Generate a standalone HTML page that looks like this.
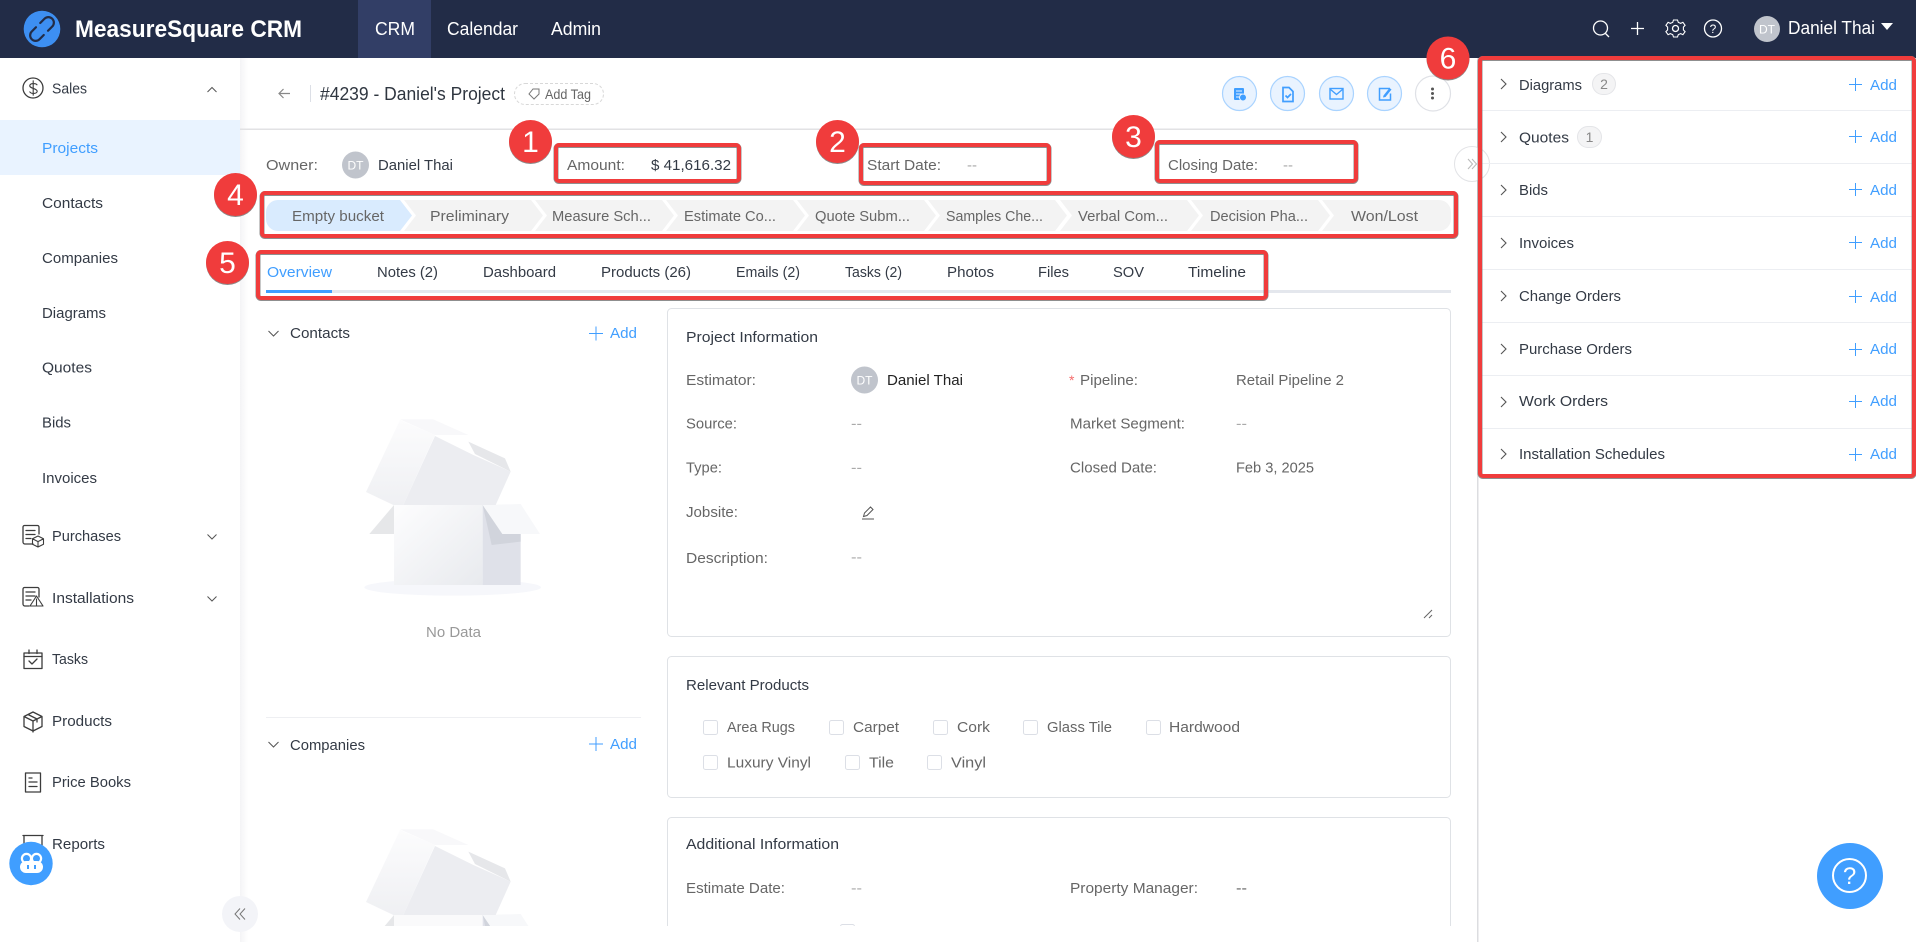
<!DOCTYPE html>
<html lang="en">
<head>
<meta charset="utf-8">
<title>MeasureSquare CRM</title>
<style>
html,body{margin:0;padding:0;background:#fff;width:1916px;height:942px;overflow:hidden}
svg{display:block;font-family:"Liberation Sans",Arial,sans-serif;font-size:15px}
.d{fill:#333a45}.g{fill:#666}.l{fill:#999}.b{fill:#409eff}.w{fill:#fff}
.dash{fill:#aaa}
.ic{fill:none;stroke:#3c3c3c;stroke-width:1.3;stroke-linejoin:round;stroke-linecap:round}
.ch{fill:none;stroke:#555;stroke-width:1}
.wi{fill:none;stroke:#fff;stroke-width:1.3}
.bl{fill:none;stroke:#409eff;stroke-width:1}
.rb{fill:none;stroke:#f03c3c;stroke-width:4}
.rs{fill:none;stroke:#8f8f8f;stroke-width:5}
.cb{fill:#fff;stroke:#dcdfe6;stroke-width:1}
.sep{stroke:#eceef2;stroke-width:1}
.num{fill:#fff;font-size:30px;text-anchor:middle}
</style>
</head>
<body>
<svg width="1916" height="942" viewBox="0 0 1916 942" xmlns="http://www.w3.org/2000/svg">
<defs>
<linearGradient id="sh" x1="0" x2="1" y1="0" y2="0"><stop offset="0" stop-color="#f4f4f6"/><stop offset="1" stop-color="#fff"/></linearGradient>
<linearGradient id="bf" x1="0" x2="1" y1="0" y2="1"><stop offset="0" stop-color="#fdfdfe"/><stop offset="1" stop-color="#e8eaee"/></linearGradient>
<linearGradient id="bl" x1="0" x2="0" y1="0" y2="1"><stop offset="0" stop-color="#fcfcfd"/><stop offset="1" stop-color="#eff0f3"/></linearGradient>
<g id="lid">
<polygon points="420,360 525,405 430,615 400,615 318,576" fill="url(#bl)"/>
<polygon points="420,358 520,358 625,405 525,405" fill="#f8f8fa"/>
<polygon points="525,408 640,465 752,515 707,615 430,615" fill="#ecedf1"/>
<polygon points="625,425 735,475 752,515 645,462" fill="#e6e7ea"/>
</g>
</defs>

<!-- main background pieces -->
<rect x="240" y="58" width="8" height="884" fill="url(#sh)"/>

<!-- sidebar -->
<rect x="0" y="120" width="240" height="55" fill="#e9f3ff"/>
<circle cx="33" cy="88" r="10" class="ic"/>
<path d="M37 84.800c-1-1.600-6.500-2-7.200.6-.8 3.200 7.400 2.800 7.400 5.900-.5 2.900-6.200 2.600-7.400.6M33.200 80.800v14.400" class="ic" style="stroke-width:1.100"/>
<text x="52" y="93.500" class="d" textLength="35" lengthAdjust="spacingAndGlyphs">Sales</text>
<path d="M207.500 92l4.500-4.500 4.500 4.500" class="ch"/>
<text x="42" y="153" class="b" textLength="56" lengthAdjust="spacingAndGlyphs">Projects</text>
<text x="42" y="208" class="d" textLength="61" lengthAdjust="spacingAndGlyphs">Contacts</text>
<text x="42" y="263" class="d" textLength="76" lengthAdjust="spacingAndGlyphs">Companies</text>
<text x="42" y="318" class="d" textLength="64" lengthAdjust="spacingAndGlyphs">Diagrams</text>
<text x="42" y="372.500" class="d" textLength="50" lengthAdjust="spacingAndGlyphs">Quotes</text>
<text x="42" y="427.500" class="d" textLength="29" lengthAdjust="spacingAndGlyphs">Bids</text>
<text x="42" y="483" class="d" textLength="55" lengthAdjust="spacingAndGlyphs">Invoices</text>

<path d="M33 544h-8a2 2 0 0 1-2-2v-15a1.500 1.500 0 0 1 1.500-1.500h13a1.500 1.500 0 0 1 1.500 1.500v7M26 530.500h9M26 534.500h9M26 538.500h5" class="ic"/>
<path d="M38 536l5.500 2.800v5.400l-5.500 2.800-5.500-2.800v-5.400zM32.500 538.800l5.500 2.800 5.500-2.800M38 541.600v5.400" class="ic" style="stroke-width:1.100"/>
<text x="52" y="541" class="d" textLength="69" lengthAdjust="spacingAndGlyphs">Purchases</text>
<path d="M207.500 534.500l4.500 4.500 4.500-4.500" class="ch"/>

<path d="M29 606h-4a2 2 0 0 1-2-2v-15a1.500 1.500 0 0 1 1.500-1.500h13a1.500 1.500 0 0 1 1.500 1.500v8M26 592h9M26 596h9M26 600h5" class="ic"/>
<path d="M30 606l6.500-10 6.500 10zM36.500 599v7" class="ic" style="stroke-width:1.100"/>
<text x="52" y="603" class="d" textLength="82" lengthAdjust="spacingAndGlyphs">Installations</text>
<path d="M207.500 596.500l4.500 4.500 4.500-4.500" class="ch"/>

<rect x="24" y="653" width="18" height="15.500" class="ic"/>
<path d="M24 656.500h18M29 650v3.500M37 650v3.500M29 661l3 3 5-5" class="ic"/>
<text x="52" y="664" class="d" textLength="36" lengthAdjust="spacingAndGlyphs">Tasks</text>

<path d="M33 712l9 4.500v10l-9 4.500-9-4.500v-10zM24 716.500l9 4.500 9-4.500M33 721v11M28 714.500l9 4.500v3" class="ic"/>
<text x="52" y="726" class="d" textLength="60" lengthAdjust="spacingAndGlyphs">Products</text>

<rect x="25.500" y="773" width="15" height="19" class="ic"/>
<path d="M29 778h3M29 782h8M29 786.500h8" class="ic"/>
<text x="52" y="787" class="d" textLength="79" lengthAdjust="spacingAndGlyphs">Price Books</text>

<path d="M23 835.500h20M24 836v14M42 836v14M28 846l3 3 5-5" class="ic"/>
<text x="52" y="849" class="d" textLength="53" lengthAdjust="spacingAndGlyphs">Reports</text>

<!-- main title bar -->
<path d="M279 93.500h11M283.500 89l-4.500 4.500 4.500 4.500" fill="none" stroke="#888" stroke-width="1.200"/>
<rect x="310" y="85" width="1" height="17" fill="#dcdfe6"/>
<text x="320" y="100" style="font-size:18px" fill="#2f3640" textLength="185" lengthAdjust="spacingAndGlyphs">#4239 - Daniel's Project</text>
<rect x="514.500" y="83.500" width="89" height="21" rx="10.500" fill="#fff" stroke="#d8d8d8" stroke-dasharray="3 2"/>
<path d="M533 89h6v5l-5 5-5-5z" fill="none" stroke="#777" stroke-width="1"/>
<text x="545" y="99" class="g" style="font-size:14px" textLength="46" lengthAdjust="spacingAndGlyphs">Add Tag</text>
<rect x="240" y="128.500" width="1238" height="1.500" fill="#e2e2e4"/>

<g fill="#e9f3ff" stroke="#a9d3ff" stroke-width="1.200">
<circle cx="1239.500" cy="93.500" r="17"/><circle cx="1287.500" cy="93.500" r="17"/><circle cx="1336.500" cy="93.500" r="17"/><circle cx="1384.500" cy="93.500" r="17"/>
</g>
<circle cx="1433" cy="93.500" r="17.500" fill="#fff" stroke="#dfe1e6" stroke-width="1.200"/>
<rect x="1234" y="88" width="10" height="12" rx="1" fill="#409eff"/><path d="M1236 91h6M1236 94h6M1236 97h3" stroke="#e9f3ff"/>
<circle cx="1243" cy="97.500" r="3.500" fill="#409eff" stroke="#e9f3ff"/>
<path d="M1283 87.500h6l4 4v10h-10zM1285.500 95.500l2 2 3.500-3.500" fill="none" stroke="#409eff" stroke-width="1.700"/>
<rect x="1330" y="88.500" width="13" height="10.500" fill="none" stroke="#409eff" stroke-width="1.400"/><path d="M1330 89l6.500 5.500 6.500-5.500" fill="none" stroke="#409eff" stroke-width="1.400"/>
<path d="M1390 88.500h-10.500v11.500h11v-6.500" fill="none" stroke="#409eff" stroke-width="1.500"/><path d="M1383.500 95.500l6-7.500 2 1.500-6 7.500-2.500.5z" fill="#409eff"/>
<circle cx="1432.500" cy="89" r="1.500" fill="#555"/><circle cx="1432.500" cy="93.500" r="1.500" fill="#555"/><circle cx="1432.500" cy="98" r="1.500" fill="#555"/>

<!-- owner row -->
<text x="266" y="170" class="g" textLength="52" lengthAdjust="spacingAndGlyphs">Owner:</text>
<circle cx="355.500" cy="165" r="13.500" fill="#c0c4cc"/>
<text x="355.500" y="169.500" fill="#fff" style="font-size:12px" text-anchor="middle">DT</text>
<text x="378" y="170" class="d" textLength="75" lengthAdjust="spacingAndGlyphs">Daniel Thai</text>
<text x="567" y="170" class="g" textLength="58" lengthAdjust="spacingAndGlyphs">Amount:</text>
<text x="651" y="170" class="d" textLength="80" lengthAdjust="spacingAndGlyphs">$ 41,616.32</text>
<text x="867" y="170" class="g" textLength="74" lengthAdjust="spacingAndGlyphs">Start Date:</text>
<text x="967" y="170" class="dash" textLength="10" lengthAdjust="spacingAndGlyphs">--</text>
<text x="1168" y="170" class="g" textLength="90" lengthAdjust="spacingAndGlyphs">Closing Date:</text>
<text x="1283" y="170" class="dash" textLength="10" lengthAdjust="spacingAndGlyphs">--</text>

<!-- stage bar -->
<path d="M278 200H400L412 215.500 400 231H278a12 12 0 0 1-12-12v-7a12 12 0 0 1 12-12z" fill="#d9ebfe"/>
<g fill="#f3f3f3">
<polygon points="404,200 531,200 543,215.500 531,231 404,231 416,215.500"/>
<polygon points="535,200 662,200 674,215.500 662,231 535,231 547,215.500"/>
<polygon points="666,200 793,200 805,215.500 793,231 666,231 678,215.500"/>
<polygon points="797,200 924,200 936,215.500 924,231 797,231 809,215.500"/>
<polygon points="928,200 1055,200 1067,215.500 1055,231 928,231 940,215.500"/>
<polygon points="1060,200 1187,200 1199,215.500 1187,231 1060,231 1072,215.500"/>
<polygon points="1191,200 1318,200 1330,215.500 1318,231 1191,231 1203,215.500"/>
<path d="M1322 200H1439a12 12 0 0 1 12 12v7a12 12 0 0 1-12 12H1322L1334 215.500z"/>
</g>
<g>
<text x="292" y="221" fill="#666" textLength="92" lengthAdjust="spacingAndGlyphs">Empty bucket</text>
<text x="430" y="221" fill="#666" textLength="79" lengthAdjust="spacingAndGlyphs">Preliminary</text>
<text x="552" y="221" fill="#666" textLength="99" lengthAdjust="spacingAndGlyphs">Measure Sch...</text>
<text x="684" y="221" fill="#666" textLength="92" lengthAdjust="spacingAndGlyphs">Estimate Co...</text>
<text x="815" y="221" fill="#666" textLength="95" lengthAdjust="spacingAndGlyphs">Quote Subm...</text>
<text x="946" y="221" fill="#666" textLength="97" lengthAdjust="spacingAndGlyphs">Samples Che...</text>
<text x="1078" y="221" fill="#666" textLength="90" lengthAdjust="spacingAndGlyphs">Verbal Com...</text>
<text x="1210" y="221" fill="#666" textLength="98" lengthAdjust="spacingAndGlyphs">Decision Pha...</text>
<text x="1351" y="221" fill="#666" textLength="67" lengthAdjust="spacingAndGlyphs">Won/Lost</text>
</g>

<!-- tabs -->
<rect x="266" y="290" width="1185" height="3" fill="#e4e7ed"/>
<rect x="266" y="290" width="66" height="3" fill="#409eff"/>
<text x="267" y="277" class="b" textLength="65" lengthAdjust="spacingAndGlyphs">Overview</text>
<text x="377" y="277" class="d" textLength="61" lengthAdjust="spacingAndGlyphs">Notes (2)</text>
<text x="483" y="277" class="d" textLength="73" lengthAdjust="spacingAndGlyphs">Dashboard</text>
<text x="601" y="277" class="d" textLength="90" lengthAdjust="spacingAndGlyphs">Products (26)</text>
<text x="736" y="277" class="d" textLength="64" lengthAdjust="spacingAndGlyphs">Emails (2)</text>
<text x="845" y="277" class="d" textLength="57" lengthAdjust="spacingAndGlyphs">Tasks (2)</text>
<text x="947" y="277" class="d" textLength="47" lengthAdjust="spacingAndGlyphs">Photos</text>
<text x="1038" y="277" class="d" textLength="31" lengthAdjust="spacingAndGlyphs">Files</text>
<text x="1113" y="277" class="d" textLength="31" lengthAdjust="spacingAndGlyphs">SOV</text>
<text x="1188" y="277" class="d" textLength="58" lengthAdjust="spacingAndGlyphs">Timeline</text>

<!-- contacts column -->
<path d="M268.500 331l5 5 5-5" class="ch"/>
<text x="290" y="338" class="d" textLength="60" lengthAdjust="spacingAndGlyphs">Contacts</text>
<path d="M589 333.500h14M596 326.500v14" class="bl"/>
<text x="610" y="338" class="b" textLength="27" lengthAdjust="spacingAndGlyphs">Add</text>
<g transform="translate(260 300) scale(.33333)">
<ellipse cx="578" cy="862" rx="265" ry="25" fill="#f6f7fb"/>
<polygon points="402,615 668,615 668,855 402,855" fill="url(#bf)"/>
<polygon points="668,615 782,615 782,855 668,855" fill="#dfe1e9"/>
<polygon points="668,615 695,735 782,725 782,700 727,700" fill="#d1d4dc"/>
<polygon points="668,615 782,612 840,702 727,702" fill="#f7f8fa"/>
<polygon points="402,615 328,702 402,702" fill="#e6e7e9"/>
<use href="#lid"/>
</g>
<text x="426" y="637" fill="#999" textLength="55" lengthAdjust="spacingAndGlyphs">No Data</text>
<rect x="266" y="717" width="375" height="1" fill="#eeeff2"/>
<path d="M268.500 742l5 5 5-5" class="ch"/>
<text x="290" y="750" class="d" textLength="75" lengthAdjust="spacingAndGlyphs">Companies</text>
<path d="M589 744h14M596 737v14" class="bl"/>
<text x="610" y="749" class="b" textLength="27" lengthAdjust="spacingAndGlyphs">Add</text>
<g transform="translate(260 710) scale(.33333)">
<polygon points="402,615 668,615 668,648 402,648" fill="#fafafb"/>
<polygon points="668,615 782,615 782,648 668,648" fill="#dfe1e9"/>
<polygon points="668,615 675.400,648 690.900,648" fill="#d1d4dc"/>
<polygon points="668,615 782,612 805.200,648 690.400,648" fill="#f7f8fa"/>
<polygon points="402,615 374,648 402,648" fill="#e6e7e9"/>
<use href="#lid"/>
</g>

<!-- cards -->
<rect x="667.500" y="308.500" width="783" height="328" rx="4" fill="#fff" stroke="#dfe2e6"/>
<text x="686" y="342" class="d" textLength="132" lengthAdjust="spacingAndGlyphs">Project Information</text>
<text x="686" y="385" class="g" textLength="70" lengthAdjust="spacingAndGlyphs">Estimator:</text>
<circle cx="864.500" cy="380" r="13.500" fill="#c0c4cc"/>
<text x="864.500" y="384.500" fill="#fff" style="font-size:12px" text-anchor="middle">DT</text>
<text x="887" y="385" fill="#222" textLength="76" lengthAdjust="spacingAndGlyphs">Daniel Thai</text>
<text x="1069" y="385" fill="#f56c6c" style="font-size:14px">*</text>
<text x="1080" y="385" class="g" textLength="58" lengthAdjust="spacingAndGlyphs">Pipeline:</text>
<text x="1236" y="385" class="g" textLength="108" lengthAdjust="spacingAndGlyphs">Retail Pipeline 2</text>
<text x="686" y="428.500" class="g" textLength="51" lengthAdjust="spacingAndGlyphs">Source:</text>
<text x="851" y="428.500" class="dash" textLength="11" lengthAdjust="spacingAndGlyphs">--</text>
<text x="1070" y="428.500" class="g" textLength="115" lengthAdjust="spacingAndGlyphs">Market Segment:</text>
<text x="1236" y="428.500" class="dash" textLength="11" lengthAdjust="spacingAndGlyphs">--</text>
<text x="686" y="472.500" class="g" textLength="36" lengthAdjust="spacingAndGlyphs">Type:</text>
<text x="851" y="472.500" class="dash" textLength="11" lengthAdjust="spacingAndGlyphs">--</text>
<text x="1070" y="472.500" class="g" textLength="87" lengthAdjust="spacingAndGlyphs">Closed Date:</text>
<text x="1236" y="472.500" class="g" textLength="78" lengthAdjust="spacingAndGlyphs">Feb 3, 2025</text>
<text x="686" y="517" class="g" textLength="52" lengthAdjust="spacingAndGlyphs">Jobsite:</text>
<path d="M863.500 516.500l1-3.500 6-6 2.500 2.500-6 6zM862 519h12" fill="none" stroke="#555" stroke-width="1"/>
<text x="686" y="563" class="g" textLength="82" lengthAdjust="spacingAndGlyphs">Description:</text>
<text x="851" y="562" class="dash" textLength="11" lengthAdjust="spacingAndGlyphs">--</text>
<path d="M1424 618l8-8M1429 618l3-3" stroke="#666" stroke-width="1"/>

<rect x="667.500" y="656.500" width="783" height="141" rx="4" fill="#fff" stroke="#dfe2e6"/>
<text x="686" y="690" class="d" textLength="123" lengthAdjust="spacingAndGlyphs">Relevant Products</text>
<rect x="703.500" y="720.500" width="14" height="14" rx="2" class="cb"/><text x="727" y="732" class="g" textLength="68" lengthAdjust="spacingAndGlyphs">Area Rugs</text>
<rect x="829.500" y="720.500" width="14" height="14" rx="2" class="cb"/><text x="853" y="732" class="g" textLength="46" lengthAdjust="spacingAndGlyphs">Carpet</text>
<rect x="933.500" y="720.500" width="14" height="14" rx="2" class="cb"/><text x="957" y="732" class="g" textLength="33" lengthAdjust="spacingAndGlyphs">Cork</text>
<rect x="1023.500" y="720.500" width="14" height="14" rx="2" class="cb"/><text x="1047" y="732" class="g" textLength="65" lengthAdjust="spacingAndGlyphs">Glass Tile</text>
<rect x="1146.500" y="720.500" width="14" height="14" rx="2" class="cb"/><text x="1169" y="732" class="g" textLength="71" lengthAdjust="spacingAndGlyphs">Hardwood</text>
<rect x="703.500" y="755.500" width="14" height="14" rx="2" class="cb"/><text x="727" y="767.500" class="g" textLength="84" lengthAdjust="spacingAndGlyphs">Luxury Vinyl</text>
<rect x="845.500" y="755.500" width="14" height="14" rx="2" class="cb"/><text x="869" y="767.500" class="g" textLength="25" lengthAdjust="spacingAndGlyphs">Tile</text>
<rect x="927.500" y="755.500" width="14" height="14" rx="2" class="cb"/><text x="951" y="767.500" class="g" textLength="35" lengthAdjust="spacingAndGlyphs">Vinyl</text>

<rect x="667.500" y="817.500" width="783" height="120" rx="4" fill="#fff" stroke="#dfe2e6"/>
<text x="686" y="849" class="d" textLength="153" lengthAdjust="spacingAndGlyphs">Additional Information</text>
<text x="686" y="893" class="g" textLength="99" lengthAdjust="spacingAndGlyphs">Estimate Date:</text>
<text x="851" y="893" class="dash" textLength="11" lengthAdjust="spacingAndGlyphs">--</text>
<text x="1070" y="893" class="g" textLength="128" lengthAdjust="spacingAndGlyphs">Property Manager:</text>
<text x="1236" y="893" class="g" textLength="11" lengthAdjust="spacingAndGlyphs">--</text>
<rect x="840.500" y="924.500" width="14" height="14" rx="2" class="cb"/>

<!-- scroll clip -->
<rect x="248" y="926" width="1229" height="16" fill="#fff"/>

<!-- collapse sidebar -->
<circle cx="240" cy="914" r="18" fill="#f3f4f8"/>
<path d="M240 908.500l-5 5.500 5 5.500M245 908.500l-5 5.500 5 5.500" fill="none" stroke="#777" stroke-width="1"/>

<!-- right panel -->
<rect x="1477" y="58" width="1.500" height="884" fill="#dcdde0"/>
<circle cx="1472" cy="164" r="17.500" fill="#fff" stroke="#e2e3e6"/>
<path d="M1468 159l4.500 5-4.500 5M1472 159l4.500 5-4.500 5" fill="none" stroke="#bbb" stroke-width="1.100"/>
<g class="sep"><path d="M1482 110.500h432M1482 163.500h432M1482 216.500h432M1482 269.500h432M1482 322.500h432M1482 375.500h432M1482 428.500h432"/></g>
<g fill="none" stroke="#555" stroke-width="1.100">
<path d="M1501 79l5 5-5 5M1501 132l5 5-5 5M1501 185l5 5-5 5M1501 238l5 5-5 5M1501 291l5 5-5 5M1501 344l5 5-5 5M1501 397l5 5-5 5M1501 449l5 5-5 5"/>
</g>
<text x="1519" y="90" class="d" textLength="63" lengthAdjust="spacingAndGlyphs">Diagrams</text>
<rect x="1592.500" y="73.500" width="23" height="21" rx="10.500" fill="#f4f4f5" stroke="#e4e5e8"/><text x="1604" y="89" fill="#888" style="font-size:14px" text-anchor="middle">2</text>
<text x="1519" y="142.500" class="d" textLength="50" lengthAdjust="spacingAndGlyphs">Quotes</text>
<rect x="1577.500" y="126.500" width="24" height="21" rx="10.500" fill="#f4f4f5" stroke="#e4e5e8"/><text x="1589.500" y="142" fill="#888" style="font-size:14px" text-anchor="middle">1</text>
<text x="1519" y="195" class="d" textLength="29" lengthAdjust="spacingAndGlyphs">Bids</text>
<text x="1519" y="248" class="d" textLength="55" lengthAdjust="spacingAndGlyphs">Invoices</text>
<text x="1519" y="301" class="d" textLength="102" lengthAdjust="spacingAndGlyphs">Change Orders</text>
<text x="1519" y="354" class="d" textLength="113" lengthAdjust="spacingAndGlyphs">Purchase Orders</text>
<text x="1519" y="406" class="d" textLength="89" lengthAdjust="spacingAndGlyphs">Work Orders</text>
<text x="1519" y="459" class="d" textLength="146" lengthAdjust="spacingAndGlyphs">Installation Schedules</text>
<path class="bl" d="M1849 84.500h13M1855.500 78v13M1849 136.500h13M1855.500 130v13M1849 189.500h13M1855.500 183v13M1849 242.500h13M1855.500 236v13M1849 296.500h13M1855.500 290v13M1849 349.500h13M1855.500 343v13M1849 401.500h13M1855.500 395v13M1849 454.500h13M1855.500 448v13"/>
<text x="1870" y="90" class="b" textLength="27" lengthAdjust="spacingAndGlyphs">Add</text>
<text x="1870" y="142" class="b" textLength="27" lengthAdjust="spacingAndGlyphs">Add</text>
<text x="1870" y="195" class="b" textLength="27" lengthAdjust="spacingAndGlyphs">Add</text>
<text x="1870" y="248" class="b" textLength="27" lengthAdjust="spacingAndGlyphs">Add</text>
<text x="1870" y="302" class="b" textLength="27" lengthAdjust="spacingAndGlyphs">Add</text>
<text x="1870" y="354" class="b" textLength="27" lengthAdjust="spacingAndGlyphs">Add</text>
<text x="1870" y="406" class="b" textLength="27" lengthAdjust="spacingAndGlyphs">Add</text>
<text x="1870" y="459" class="b" textLength="27" lengthAdjust="spacingAndGlyphs">Add</text>

<!-- floating buttons -->
<circle cx="1850" cy="876" r="33" fill="#409eff"/>
<circle cx="1849.500" cy="875.500" r="16.500" fill="none" stroke="#fff" stroke-width="2"/>
<text x="1849.500" y="884" fill="#fff" style="font-size:24px" text-anchor="middle">?</text>
<circle cx="31" cy="863.500" r="21.700" fill="#409eff"/>
<circle cx="26.500" cy="858.500" r="4.600" fill="none" stroke="#fff" stroke-width="2.200"/>
<circle cx="36.500" cy="858.500" r="4.600" fill="none" stroke="#fff" stroke-width="2.200"/>
<rect x="20" y="861" width="23" height="12" rx="6" fill="#fff"/>
<rect x="27" y="865" width="2" height="4" fill="#409eff"/><rect x="34" y="865" width="2" height="4" fill="#409eff"/>

<!-- header -->
<rect x="0" y="0" width="1916" height="58" fill="#222c47"/>
<rect x="358" y="0" width="73" height="58" fill="#323e66"/>
<circle cx="42" cy="29" r="18.300" fill="#3d8ff2"/>
<g transform="rotate(-45 42 29)" fill="none" stroke="#222c47" stroke-width="2.200" stroke-linecap="round">
<path d="M39 23.500h-6a5.500 5.500 0 0 0 0 11h6M45 34.500h6a5.500 5.500 0 0 0 0-11h-6"/>
</g>
<text x="75" y="37" fill="#fff" style="font-size:24px;font-weight:700" textLength="227" lengthAdjust="spacingAndGlyphs">MeasureSquare CRM</text>
<text x="375" y="35" fill="#fff" style="font-size:18px" textLength="40" lengthAdjust="spacingAndGlyphs">CRM</text>
<text x="447" y="35" fill="#fff" style="font-size:18px" textLength="71" lengthAdjust="spacingAndGlyphs">Calendar</text>
<text x="551" y="35" fill="#fff" style="font-size:18px" textLength="50" lengthAdjust="spacingAndGlyphs">Admin</text>
<circle cx="1600.500" cy="28" r="7" class="wi"/><path d="M1605.500 33.500l3.500 3.500" class="wi"/>
<path d="M1631 28.500h13M1637.500 22v13" class="wi"/>
<circle cx="1675.500" cy="28.500" r="3" class="wi"/>
<path d="M1673.500 20l4 0 .8 2.400 2.400 1 2.200-1.100 2.200 3-1.700 1.800v2.800l1.700 1.800-2.200 3-2.200-1.100-2.400 1-.8 2.400h-4l-.8-2.400-2.400-1-2.200 1.100-2.200-3 1.700-1.800v-2.800l-1.700-1.800 2.200-3 2.200 1.100 2.400-1z" class="wi" style="stroke-width:1.100"/>
<circle cx="1713" cy="28.500" r="8.500" class="wi"/>
<text x="1713" y="33" fill="#fff" style="font-size:12px" text-anchor="middle">?</text>
<circle cx="1767" cy="29" r="13" fill="#c0c4cc"/>
<text x="1767" y="33.500" fill="#fff" style="font-size:12px" text-anchor="middle">DT</text>
<text x="1788" y="34" fill="#fff" style="font-size:18px" textLength="87" lengthAdjust="spacingAndGlyphs">Daniel Thai</text>
<polygon points="1881,23 1893,23 1887,30" fill="#fff"/>

<!-- annotations -->
<g>
<rect x="556" y="145.500" width="183" height="36" rx="3" class="rs"/><rect x="556" y="145" width="183" height="36" rx="3" class="rb"/>
<rect x="861" y="145.500" width="188" height="38" rx="3" class="rs"/><rect x="861" y="145" width="188" height="38" rx="3" class="rb"/>
<rect x="1157" y="142.500" width="199" height="39" rx="3" class="rs"/><rect x="1157" y="142" width="199" height="39" rx="3" class="rb"/>
<rect x="262" y="193.500" width="1194" height="43" rx="3" class="rs"/><rect x="262" y="193" width="1194" height="43" rx="3" class="rb"/>
<rect x="258" y="252.500" width="1008" height="46" rx="3" class="rs"/><rect x="258" y="252" width="1008" height="46" rx="3" class="rb"/>
<rect x="1480" y="58.500" width="434" height="418" rx="3" class="rs"/><rect x="1480" y="58" width="434" height="418" rx="3" class="rb"/>

<circle cx="530.500" cy="142.500" r="21.500" fill="#8a8a8a"/><circle cx="530.500" cy="141.500" r="21.500" fill="#f03c3c"/><text x="530.500" y="152" class="num">1</text>
<circle cx="837.500" cy="142.500" r="21.500" fill="#8a8a8a"/><circle cx="837.500" cy="141.500" r="21.500" fill="#f03c3c"/><text x="837.500" y="152" class="num">2</text>
<circle cx="1133.500" cy="137.500" r="21.500" fill="#8a8a8a"/><circle cx="1133.500" cy="136.500" r="21.500" fill="#f03c3c"/><text x="1133.500" y="147" class="num">3</text>
<circle cx="235.500" cy="195.500" r="21.500" fill="#8a8a8a"/><circle cx="235.500" cy="194.500" r="21.500" fill="#f03c3c"/><text x="235.500" y="205" class="num">4</text>
<circle cx="227.500" cy="263.500" r="21.500" fill="#8a8a8a"/><circle cx="227.500" cy="262.500" r="21.500" fill="#f03c3c"/><text x="227.500" y="273" class="num">5</text>
<circle cx="1448" cy="59" r="21.500" fill="#8a8a8a"/><circle cx="1448" cy="58" r="21.500" fill="#f03c3c"/><text x="1448" y="68.500" class="num">6</text>
</g>
</svg>
</body>
</html>
